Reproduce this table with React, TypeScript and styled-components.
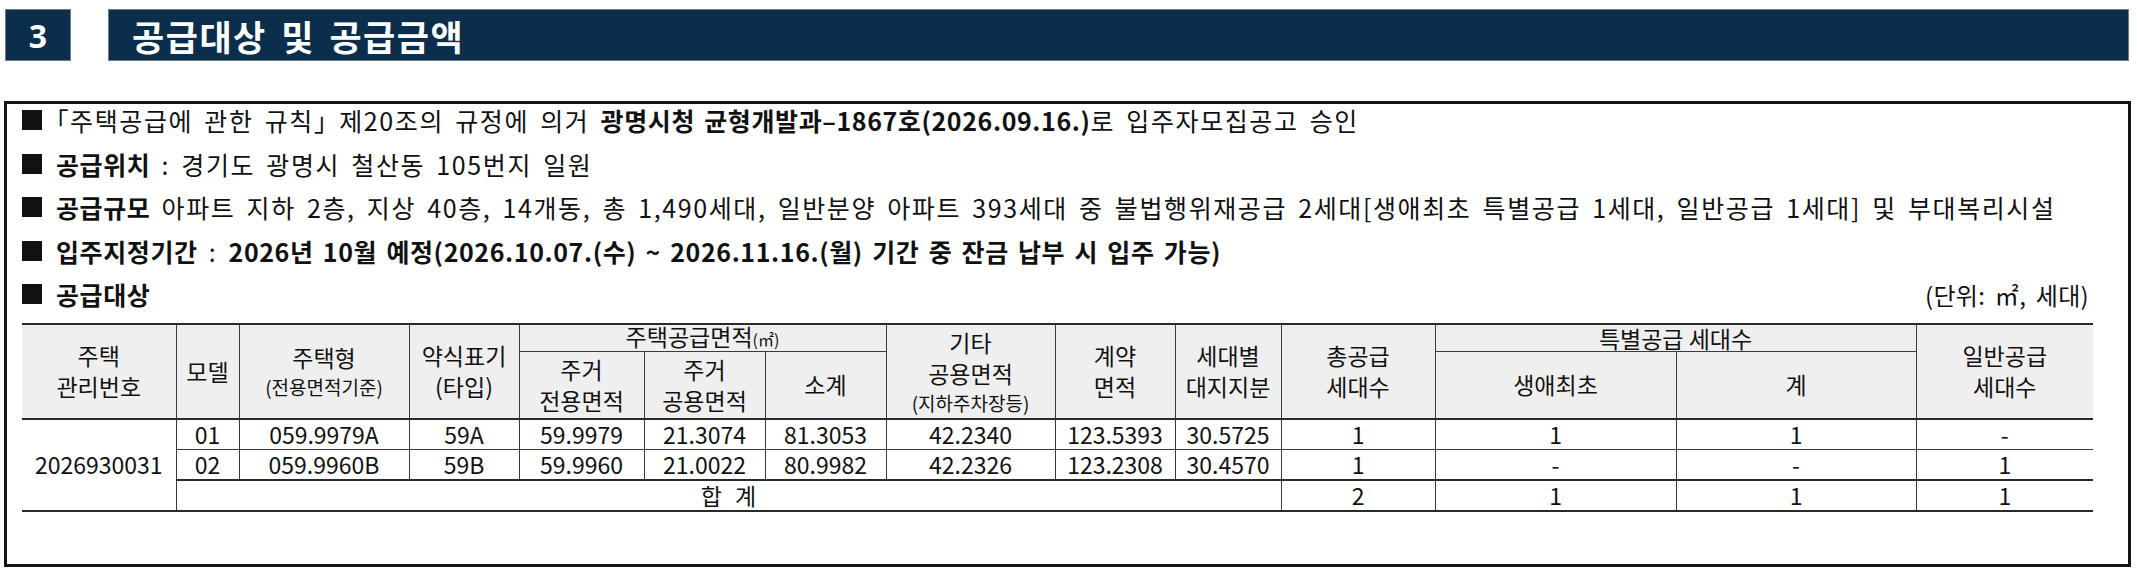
import React from "react";
import styled, { createGlobalStyle } from "styled-components";

const Global = createGlobalStyle`
  html, body { margin: 0; padding: 0; background: #ffffff; }
  body { font-family: "Noto Sans CJK KR", "Noto Sans", sans-serif; color: #111111; }
`;

const Page = styled.div`
  width: 2137px;
  height: 568px;
  box-sizing: border-box;
  padding: 9px 6px 0 4px;
  overflow: hidden;
`;

const TitleBar = styled.div`
  display: flex;
  gap: 37px;
  height: 52px;
  padding: 0 2px 0 1px;
`;

const NumBox = styled.div`
  width: 66px;
  box-sizing: border-box;
  background: #0a2e4b;
  border: 1px solid #6f7b86;
  color: #ffffff;
  font-family: "Open Sans", "Noto Sans", sans-serif;
  font-weight: 700;
  font-size: 32px;
  display: flex;
  align-items: center;
  justify-content: center;
`;

const TitleBox = styled.div`
  flex: 1;
  box-sizing: border-box;
  background: #0a2e4b;
  border: 1px solid #6f7b86;
  color: #ffffff;
  font-weight: 700;
  font-size: 35px;
  letter-spacing: 1.5px;
  word-spacing: 5px;
  display: flex;
  align-items: center;
  padding-left: 23px;
`;

const Panel = styled.div`
  margin-top: 40px;
  height: 466px;
  box-sizing: border-box;
  border: 3px solid #151515;
  padding: 0 35px 0 15px;
`;

const Lines = styled.div`
  display: flex;
  flex-direction: column;
  gap: 11.5px;
`;

const Line = styled.div`
  display: flex;
  align-items: center;
  height: 32px;
  font-size: 25px;
  white-space: pre;
  letter-spacing: 1.6px;
  word-spacing: 4px;
`;

const Bullet = styled.span`
  width: 20px;
  height: 20px;
  background: #111111;
  margin-right: 14px;
  flex: none;
`;

const B = styled.b`
  font-weight: 700;
  letter-spacing: 0.6px;
  word-spacing: 3px;
`;

const Corner = styled.span`
  font-feature-settings: "halt";
`;

const Unit = styled.span`
  margin-left: auto;
  margin-right: 4px;
  font-size: 24px;
  letter-spacing: 0.3px;
  word-spacing: 4px;
`;

const Table = styled.table`
  margin-top: 13px;
  width: 2071px;
  table-layout: fixed;
  border-collapse: collapse;
  font-size: 23px;
  border-top: 2px solid #2a2a2a;
  border-bottom: 2px solid #2a2a2a;
`;

const HeadRow = styled.tr<{ $h: number; $last?: boolean }>`
  height: ${(p) => p.$h}px;
  border-bottom: ${(p) => (p.$last ? "2px solid #2a2a2a" : "1px solid #3a3a3a")};
`;

const Th = styled.th<{ $tight?: boolean }>`
  background: #efefef;
  font-weight: 400;
  border: 1px solid #3a3a3a;
  padding: 0;
  text-align: center;
  vertical-align: middle;
  line-height: ${(p) => (p.$tight ? "23px" : "31px")};
  &:first-child { border-left: none; }
  &:last-child { border-right: none; }
`;

const Sub = styled.span<{ $size: number }>`
  display: block;
  font-size: ${(p) => p.$size}px;
  line-height: 27px;
`;

const SqUnit = styled.span`
  font-size: 16px;
`;

const Td = styled.td<{ $edgeL?: boolean; $edgeR?: boolean }>`
  border: 1px solid #3a3a3a;
  padding: 0;
  height: 29px;
  line-height: 29px;
  text-align: center;
  vertical-align: middle;
  word-spacing: 8px;
  ${(p) => (p.$edgeL ? "border-left: none;" : "")}
  ${(p) => (p.$edgeR ? "border-right: none;" : "")}
`;

const BodyRow = styled.tr<{ $thick?: boolean }>`
  border-top: ${(p) => (p.$thick ? "2px solid #2a2a2a" : "1px solid #3a3a3a")};
`;

const widths = [154, 63, 170, 110, 125, 121, 121, 169, 120, 106, 154, 241, 240, 177];

const rows = [
  ["01", "059.9979A", "59A", "59.9979", "21.3074", "81.3053", "42.2340", "123.5393", "30.5725", "1", "1", "1", "-"],
  ["02", "059.9960B", "59B", "59.9960", "21.0022", "80.9982", "42.2326", "123.2308", "30.4570", "1", "-", "-", "1"],
];

export default function App() {
  return (
    <Page>
      <Global />
      <TitleBar>
        <NumBox>3</NumBox>
        <TitleBox>공급대상 및 공급금액</TitleBox>
      </TitleBar>
      <Panel>
        <Lines>
          <Line>
            <Bullet />
            <Corner>「</Corner>주택공급에 관한 규칙<Corner>」</Corner> 제20조의 규정에 의거 <B>광명시청 균형개발과–1867호(2026.09.16.)</B>로 입주자모집공고 승인
          </Line>
          <Line>
            <Bullet />
            <B>공급위치</B> : 경기도 광명시 철산동 105번지 일원
          </Line>
          <Line>
            <Bullet />
            <B>공급규모</B> 아파트 지하 2층, 지상 40층, 14개동, 총 1,490세대, 일반분양 아파트 393세대 중 불법행위재공급 2세대[생애최초 특별공급 1세대, 일반공급 1세대] 및 부대복리시설
          </Line>
          <Line>
            <Bullet />
            <B>입주지정기간</B> : <B>2026년 10월 예정(2026.10.07.(수) ~ 2026.11.16.(월) 기간 중 잔금 납부 시 입주 가능)</B>
          </Line>
          <Line>
            <Bullet />
            <B>공급대상</B>
            <Unit>(단위: ㎡, 세대)</Unit>
          </Line>
        </Lines>
        <Table>
          <colgroup>
            {widths.map((w, i) => (
              <col key={i} style={{ width: w }} />
            ))}
          </colgroup>
          <thead>
            <HeadRow $h={26}>
              <Th rowSpan={2}>주택<br />관리번호</Th>
              <Th rowSpan={2}>모델</Th>
              <Th rowSpan={2}>주택형<Sub $size={19}>(전용면적기준)</Sub></Th>
              <Th rowSpan={2}>약식표기<br />(타입)</Th>
              <Th colSpan={3} $tight>주택공급면적<SqUnit>(㎡)</SqUnit></Th>
              <Th rowSpan={2}>기타<br />공용면적<Sub $size={19}>(지하주차장등)</Sub></Th>
              <Th rowSpan={2}>계약<br />면적</Th>
              <Th rowSpan={2}>세대별<br />대지지분</Th>
              <Th rowSpan={2}>총공급<br />세대수</Th>
              <Th colSpan={2} $tight>특별공급 세대수</Th>
              <Th rowSpan={2}>일반공급<br />세대수</Th>
            </HeadRow>
            <HeadRow $h={67} $last>
              <Th>주거<br />전용면적</Th>
              <Th>주거<br />공용면적</Th>
              <Th>소계</Th>
              <Th>생애최초</Th>
              <Th>계</Th>
            </HeadRow>
          </thead>
          <tbody>
            {rows.map((r, i) => (
              <BodyRow key={i}>
                {i === 0 && (
                  <Td rowSpan={3} $edgeL>
                    2026930031
                  </Td>
                )}
                {r.map((c, j) => (
                  <Td key={j} $edgeR={j === r.length - 1}>
                    {c}
                  </Td>
                ))}
              </BodyRow>
            ))}
            <BodyRow $thick>
              <Td colSpan={9}>합 계</Td>
              <Td>2</Td>
              <Td>1</Td>
              <Td>1</Td>
              <Td $edgeR>1</Td>
            </BodyRow>
          </tbody>
        </Table>
      </Panel>
    </Page>
  );
}
